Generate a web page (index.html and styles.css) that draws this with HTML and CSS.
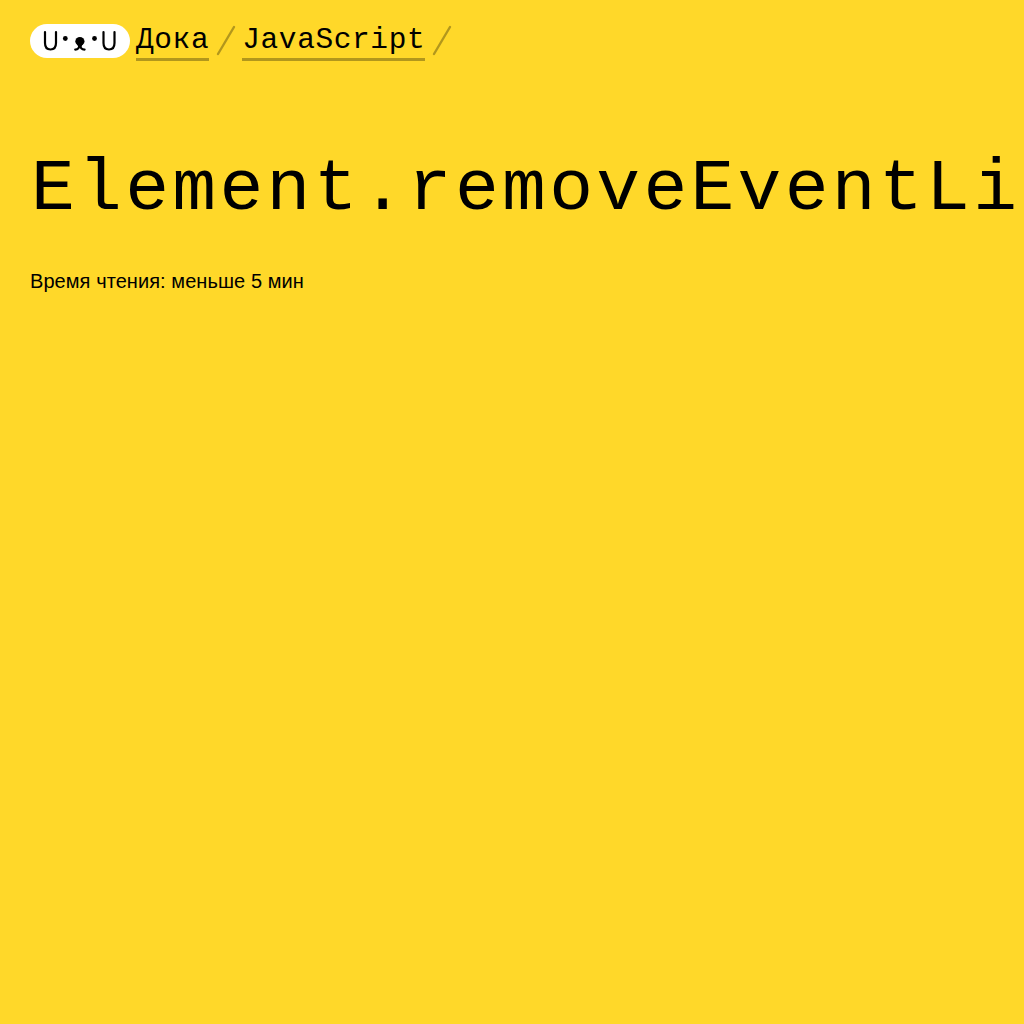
FILE: index.html
```html
<!DOCTYPE html>
<html lang="ru">
<head>
<meta charset="utf-8">
<title>Дока</title>
<link rel="stylesheet" href="styles.css">
</head>
<body>
<header class="header">
  <nav class="breadcrumbs">
    <svg class="logo" viewBox="0 0 100 34" aria-hidden="true">
      <rect width="100" height="34" rx="17" fill="#fff"/>
      <g fill="none" stroke="#000" stroke-width="2.200" stroke-linecap="round">
        <path d="M15 8v11q0 6.500 5.500 6.500t5.500-6.500V8"/>
        <path d="M73.500 8v11q0 6.500 5.500 6.500t5.500-6.500V8"/>
        <path d="M45.200 25.600c3 0 4.300-1.800 4.600-5.600c.3 3.800 1.600 5.600 4.800 5.600"/>
      </g>
      <circle cx="35.300" cy="14.500" r="2.400"/>
      <circle cx="64.500" cy="14.500" r="2.400"/>
      <ellipse cx="49.900" cy="17.300" rx="4.600" ry="4.300"/>
      <path d="M46.500 19h6.800l-2 4h-3z"/>
    </svg>
    <a class="link" href="#">Дока</a>
    <svg class="separator" viewBox="0 0 20 32" aria-hidden="true"><path d="M2 30 18 3"/></svg>
    <a class="link" href="#">JavaScript</a>
    <svg class="separator" viewBox="0 0 20 32" aria-hidden="true"><path d="M2 30 18 3"/></svg>
  </nav>
</header>
<main class="main">
  <h1 class="title">Element.removeEventLi</h1>
  <p class="reading-time">Время чтения: меньше 5 мин</p>
</main>
</body>
</html>
```
FILE: styles.css
```css
* { box-sizing: border-box; }
body {
  margin: 0;
  min-height: 100vh;
  overflow: hidden;
  background: #ffd829;
  color: #000;
  font-family: "Liberation Sans", Arial, sans-serif;
}
.header { padding: 24px 30px 0; }
.breadcrumbs {
  display: flex;
  align-items: flex-start;
  height: 38px;
}
.logo {
  flex: none;
  width: 100px;
  height: 34px;
  margin-right: 6px;
}
.link {
  height: 37px;
  color: inherit;
  font: 29.5px/33px "Liberation Mono", monospace;
  letter-spacing: .6px;
  text-decoration: none;
  border-bottom: 3px solid rgba(0, 0, 0, .3);
}
.separator {
  flex: none;
  width: 20px;
  height: 32px;
  margin: 0 6px 0 7px;
  fill: none;
  stroke: rgba(0, 0, 0, .3);
  stroke-width: 2.4;
  stroke-linecap: round;
}
.main { padding: 86px 0 0 30px; }
.title {
  margin: 0;
  padding-left: 1px;
  font: 400 73px/84px "Liberation Mono", monospace;
  letter-spacing: 3.3px;
  white-space: nowrap;
}
.reading-time {
  margin: 37px 0 0;
  font-size: 20px;
  line-height: 24px;
  letter-spacing: .07px;
}
```
